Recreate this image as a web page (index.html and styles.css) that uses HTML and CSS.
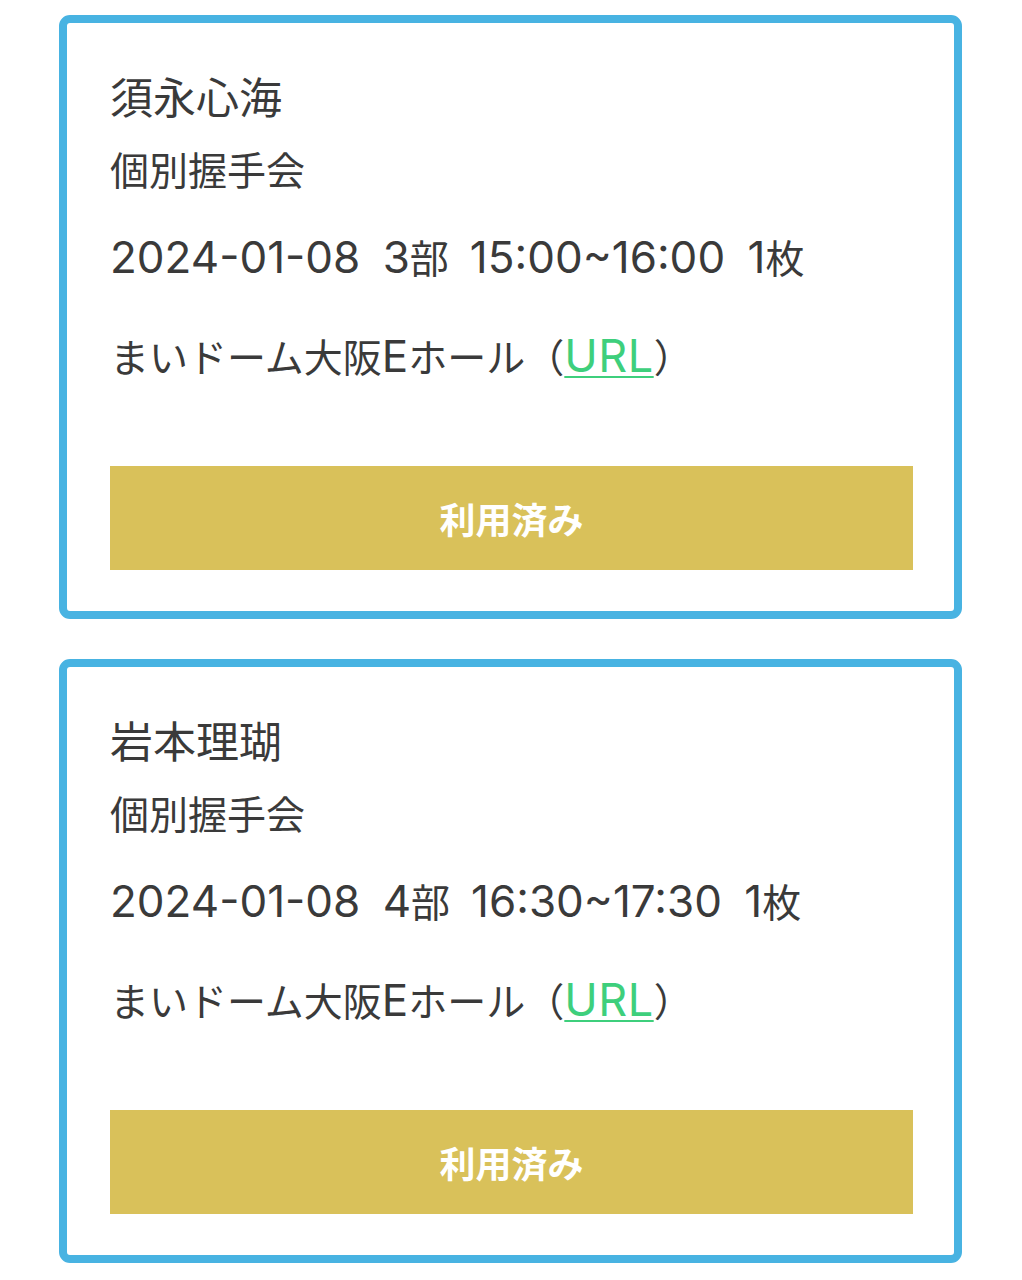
FILE: index.html
```html
<!DOCTYPE html>
<html lang="ja">
<head>
<meta charset="utf-8">
<title>チケット</title>
<link rel="stylesheet" href="styles.css">
</head>
<body>
<main class="list">
  <section class="card">
    <h2 class="name">須永心海</h2>
    <p class="event">個別握手会</p>
    <p class="date"><span class="lat">2024-01-08 3</span>部 <span class="lat">15:00~16:00 1</span>枚</p>
    <p class="place">まいドーム大阪<span class="lat">E</span>ホール（<a href="#" class="url lat">URL</a>）</p>
    <div class="btn">利用済み</div>
  </section>
  <section class="card">
    <h2 class="name">岩本理瑚</h2>
    <p class="event">個別握手会</p>
    <p class="date"><span class="lat">2024-01-08 4</span>部 <span class="lat">16:30~17:30 1</span>枚</p>
    <p class="place">まいドーム大阪<span class="lat">E</span>ホール（<a href="#" class="url lat">URL</a>）</p>
    <div class="btn">利用済み</div>
  </section>
</main>
</body>
</html>
```

FILE: styles.css
```css
html, body {
  margin: 0;
  padding: 0;
  background: #ffffff;
}
body {
  font-family: "Inter", "Noto Sans CJK JP", sans-serif;
  color: #3a3a3a;
}
.list {
  display: flex;
  flex-direction: column;
  gap: 40px;
  padding: 15px 60px 10px 59px;
}
.card {
  box-sizing: border-box;
  width: 903px;
  border: 8px solid #48b3e2;
  border-radius: 11px;
  padding: 42px 41px 41px 43px;
  display: flex;
  flex-direction: column;
}
.name {
  margin: 0;
  font-size: 43px;
  font-weight: 400;
  line-height: 66px;
}
.event {
  margin: 0;
  font-size: 39px;
  line-height: 80px;
}
.date {
  margin: 0;
  font-size: 39px;
  line-height: 96px;
  white-space: nowrap;
  word-spacing: 10px;
}
.place {
  margin: 0;
  font-size: 39px;
  line-height: 102px;
}
.lat {
  font-size: 44px;
  line-height: 1;
}
.url {
  color: #3ecf7c;
  font-size: 45px;
  letter-spacing: 0.5px;
  text-decoration: underline;
  text-underline-offset: 4px;
  text-decoration-thickness: 2px;
}
.btn {
  margin-top: 57px;
  height: 104px;
  background: #d9c15a;
  color: #ffffff;
  font-weight: 700;
  font-size: 36px;
  display: flex;
  align-items: center;
  justify-content: center;
}
```
